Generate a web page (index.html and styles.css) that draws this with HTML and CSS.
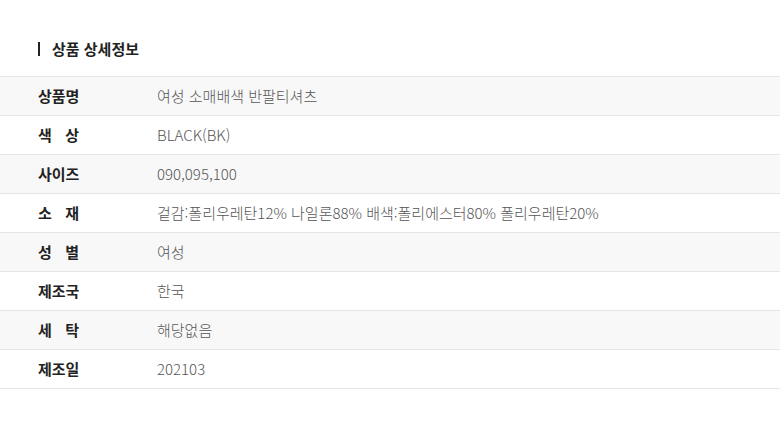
FILE: index.html
```html
<!DOCTYPE html>
<html lang="ko">
<head>
<meta charset="utf-8">
<link rel="stylesheet" href="styles.css">
</head>
<body>
<div class="page">
  <h2 class="title">상품 상세정보</h2>
  <div class="table">
    <div class="row alt"><div class="label">상품명</div><div class="value">여성 소매배색 반팔티셔츠</div></div>
    <div class="row"><div class="label">색 상</div><div class="value">BLACK(BK)</div></div>
    <div class="row alt"><div class="label">사이즈</div><div class="value">090,095,100</div></div>
    <div class="row"><div class="label">소 재</div><div class="value">겉감:폴리우레탄12% 나일론88% 배색:폴리에스터80% 폴리우레탄20%</div></div>
    <div class="row alt"><div class="label">성 별</div><div class="value">여성</div></div>
    <div class="row"><div class="label">제조국</div><div class="value">한국</div></div>
    <div class="row alt"><div class="label">세 탁</div><div class="value">해당없음</div></div>
    <div class="row"><div class="label">제조일</div><div class="value">202103</div></div>
  </div>
</div>
</body>
</html>
```
FILE: styles.css
```css
html, body {
  margin: 0;
  padding: 0;
  background: #fff;
}
body {
  font-family: "Noto Sans CJK KR", "Noto Sans", sans-serif;
  color: #222;
}
.page {
  padding-top: 39px;
}
.title {
  margin: 0 0 17px 38px;
  font-size: 15px;
  font-weight: 700;
  line-height: 20px;
  height: 20px;
  display: flex;
  align-items: center;
  gap: 12px;
}
.title::before {
  content: "";
  width: 2px;
  height: 14px;
  background: #222;
}
.table {
  border-top: 1px solid #e6e6e6;
}
.row {
  display: flex;
  align-items: center;
  height: 36px;
  padding-bottom: 2px;
  border-bottom: 1px solid #e6e6e6;
}
.row.alt {
  background: #f8f8f8;
}
.label {
  width: 41px;
  margin-left: 38px;
  margin-right: 78px;
  font-size: 15px;
  font-weight: 700;
  color: #222;
  text-align: justify;
  text-align-last: justify;
  white-space: nowrap;
}
.value {
  font-size: 15px;
  color: #555;
  font-weight: 300;
}
```
